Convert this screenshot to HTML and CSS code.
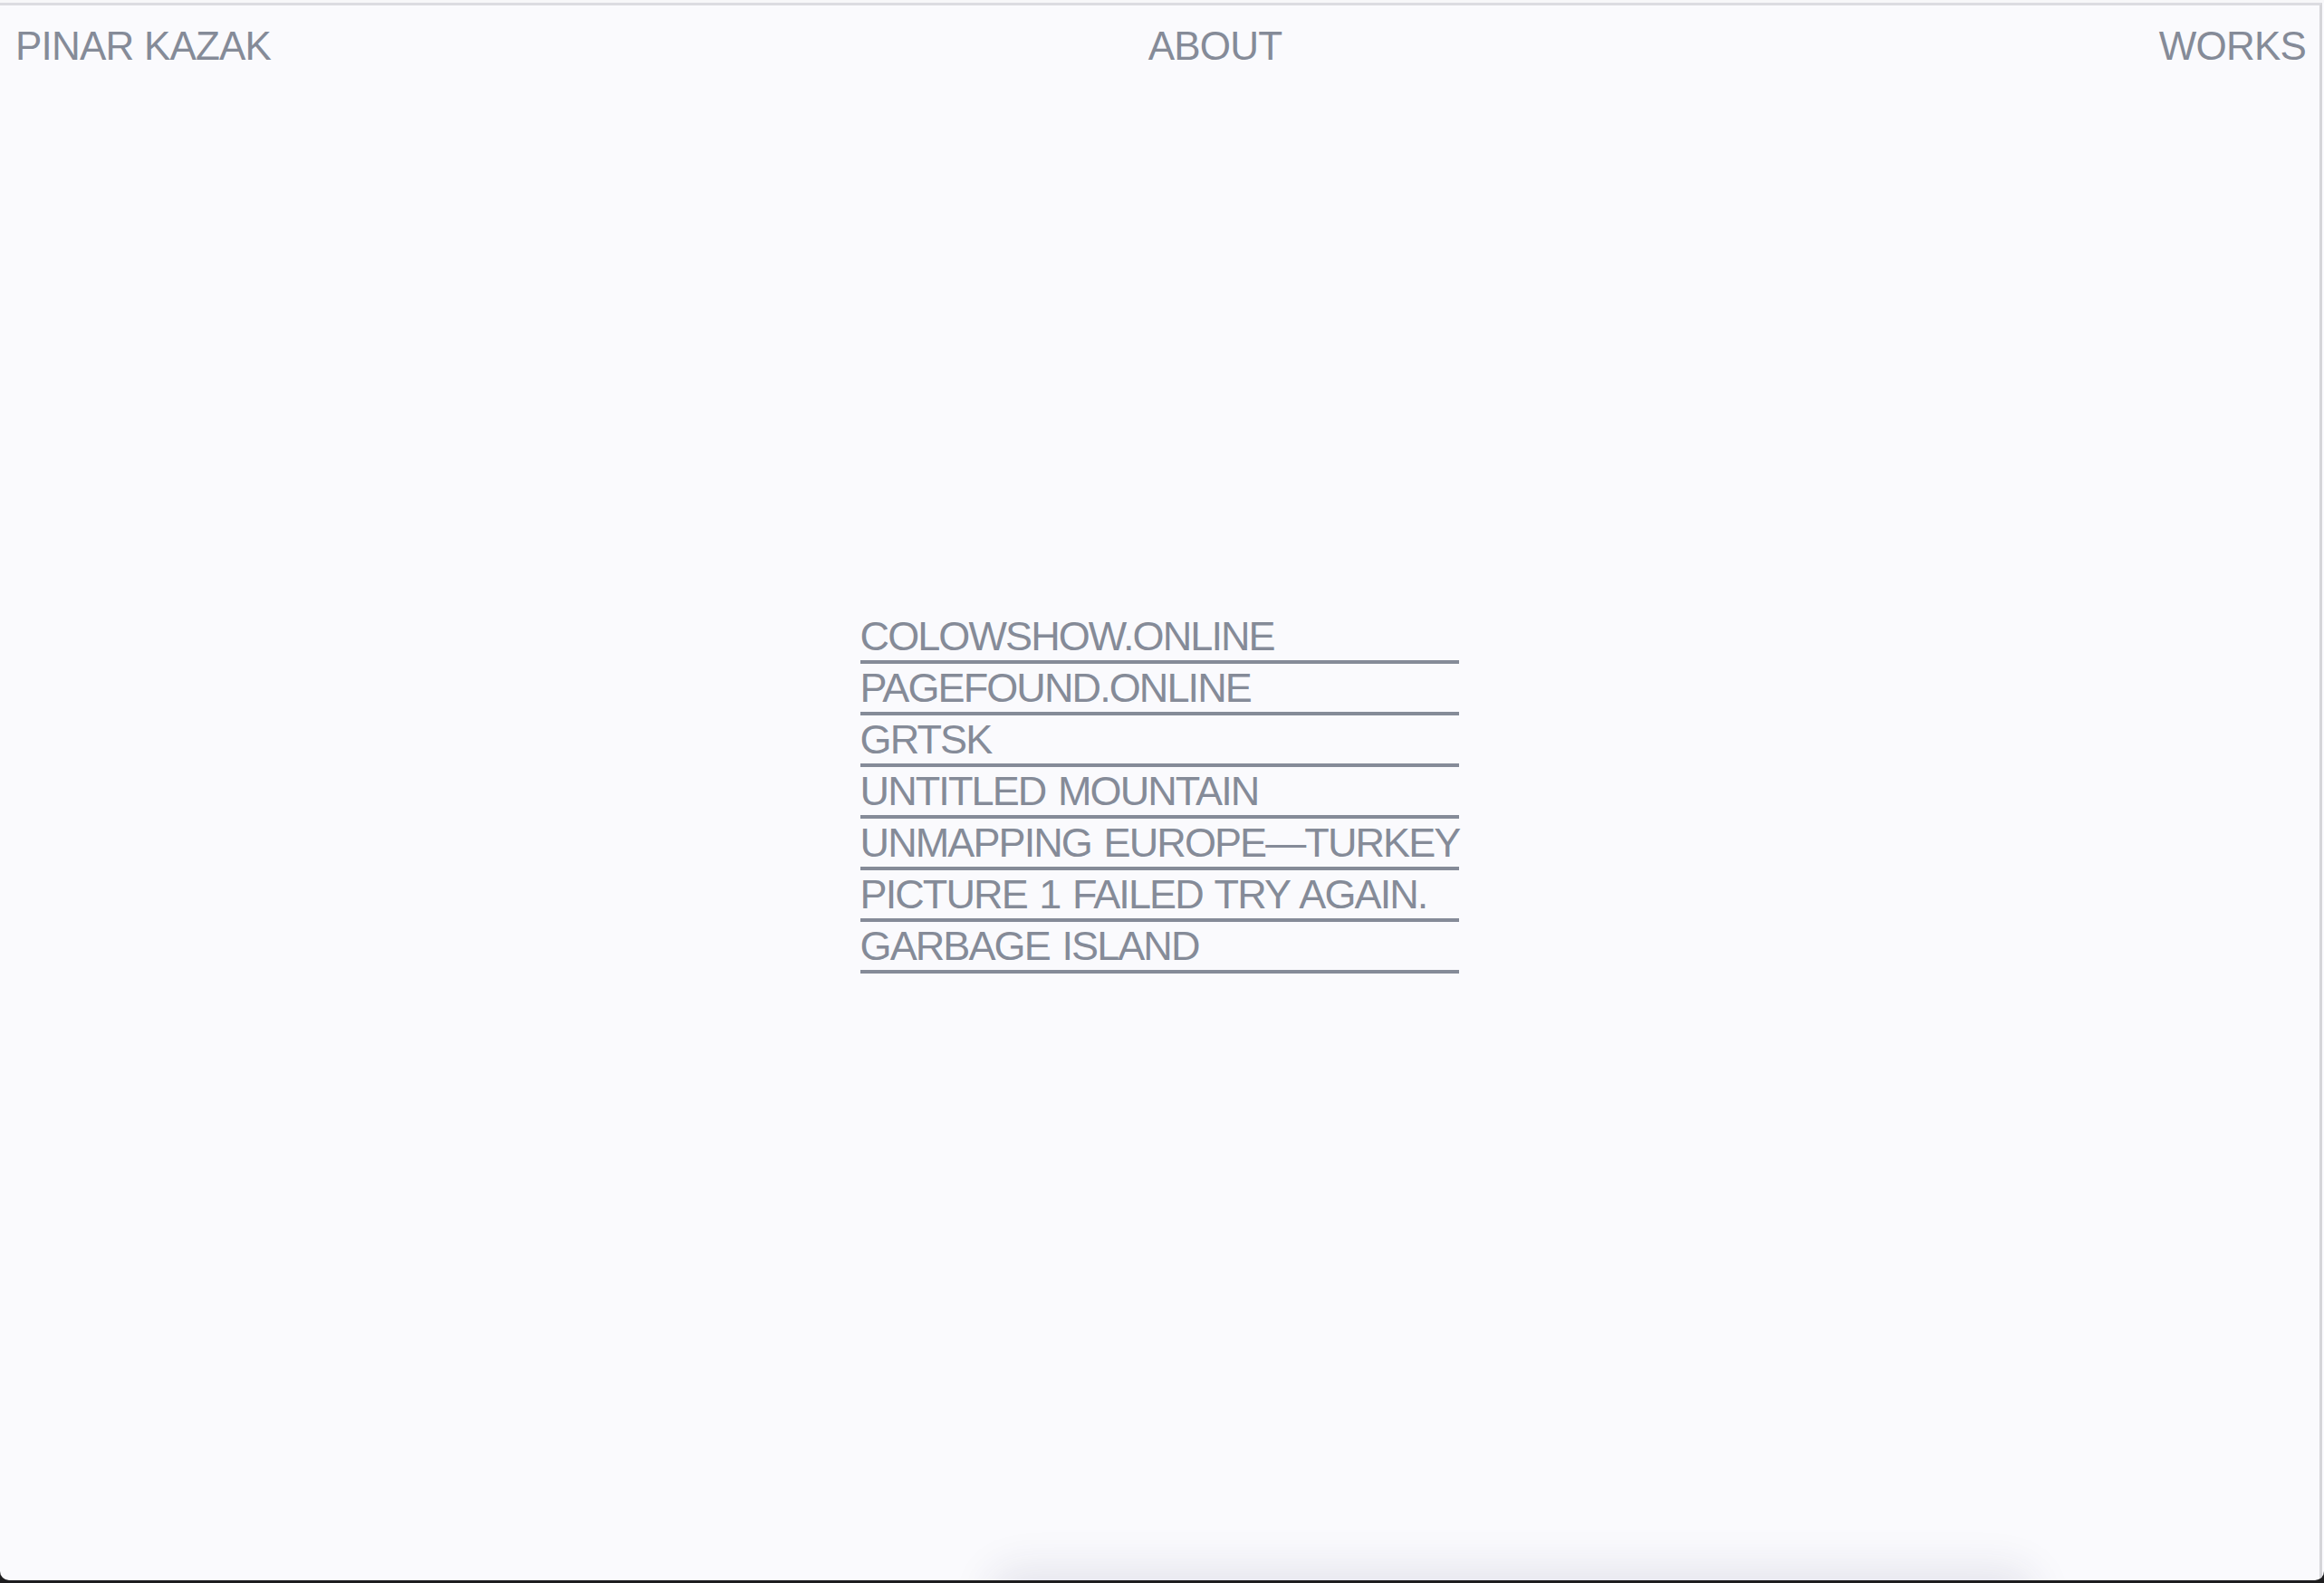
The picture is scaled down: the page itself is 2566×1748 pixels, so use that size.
FILE: index.html
```html
<!DOCTYPE html>
<html lang="en">
<head>
<meta charset="utf-8">
<title>Pinar Kazak</title>
<link rel="stylesheet" href="styles.css">
</head>
<body>
<div class="window">
  <div class="chrome">
    <header class="site-header">
      <a class="nav-link" href="#">PINAR KAZAK</a>
      <a class="nav-link" href="#">ABOUT</a>
      <a class="nav-link" href="#">WORKS</a>
    </header>
    <main class="works">
      <ul class="work-list">
        <li class="work-item">COLOWSHOW.ONLINE</li>
        <li class="work-item">PAGEFOUND.ONLINE</li>
        <li class="work-item">GRTSK</li>
        <li class="work-item">UNTITLED MOUNTAIN</li>
        <li class="work-item">UNMAPPING EUROPE—TURKEY</li>
        <li class="work-item">PICTURE 1 FAILED TRY AGAIN.</li>
        <li class="work-item">GARBAGE ISLAND</li>
      </ul>
    </main>
  </div>
</div>
</body>
</html>
```
FILE: styles.css
```css
html {
  background: #1d1d1f;
}
body {
  margin: 0;
  height: 1748px;
  overflow: hidden;
  font-family: "Liberation Sans", Arial, sans-serif;
  color: #858b98;
}
.window {
  position: relative;
  height: 1745px;
  background: #fafafd;
  border-top: 3px solid #f7f7f9;
  box-sizing: border-box;
  border-radius: 0 0 10px 10px;
  overflow: hidden;
}
.window::after {
  content: "";
  position: absolute;
  left: 1105px;
  width: 1130px;
  bottom: -40px;
  height: 40px;
  border-radius: 20px;
  box-shadow: 0 0 45px 14px rgba(40, 40, 90, 0.1);
}
.chrome {
  height: 100%;
  box-sizing: border-box;
  margin-right: 2px;
  border-top: 3px solid #dcdce1;
  border-right: 3px solid #d5d5d9;
  display: grid;
  grid-template-rows: 1fr;
  grid-template-columns: 1fr;
}
.site-header {
  grid-area: 1 / 1;
  align-self: start;
  display: flex;
  justify-content: space-between;
  padding: 23px 15px 0 17px;
  position: relative;
  z-index: 1;
}
.nav-link {
  font-size: 44px;
  line-height: 44px;
  letter-spacing: -0.8px;
  color: #858b98;
  text-decoration: none;
}
.works {
  grid-area: 1 / 1;
  display: flex;
  align-items: center;
  justify-content: center;
}
.work-list {
  list-style: none;
  margin: 0;
  padding: 0;
}
.work-item {
  font-size: 45px;
  line-height: 53px;
  letter-spacing: -1.9px;
  word-spacing: 3px;
  white-space: nowrap;
  border-bottom: 4px solid #858b98;
}
```
